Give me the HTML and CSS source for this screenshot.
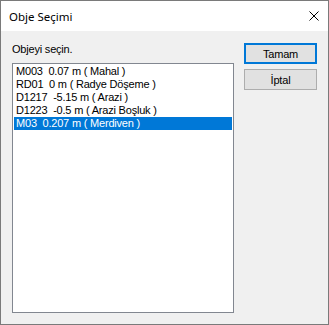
FILE: index.html
```html
<!DOCTYPE html>
<html>
<head>
<meta charset="UTF-8">
<title>Obje Seçimi</title>
<link rel="stylesheet" href="styles.css">
</head>
<body>
<div class="window">
	<div class="titlebar">
		<span class="title">Obje Seçimi</span>
		<svg class="close" width="10" height="10" viewBox="0 0 10 10">
			<path d="M0.5 0.5 L9.5 9.5 M9.5 0.5 L0.5 9.5" stroke="#000" stroke-width="1" fill="none"/>
		</svg>
	</div>
	<div class="client">
		<div class="main">
			<div class="label">Objeyi seçin.</div>
			<div class="listbox">
				<div class="item">M003&nbsp; 0.07 m ( Mahal )</div>
				<div class="item">RD01&nbsp; 0 m ( Radye Döşeme )</div>
				<div class="item">D1217&nbsp; -5.15 m ( Arazi )</div>
				<div class="item">D1223&nbsp; -0.5 m ( Arazi Boşluk )</div>
				<div class="item selected">M03&nbsp; 0.207 m ( Merdiven )</div>
			</div>
		</div>
		<div class="buttons">
			<button class="btn default">Tamam</button>
			<button class="btn">İptal</button>
		</div>
	</div>
</div>
</body>
</html>
```

FILE: styles.css
```css
html, body {
	margin: 0;
	padding: 0;
	background: #2b2b45;
}
.window {
	width: 329px;
	height: 325px;
	box-sizing: border-box;
	border: 1px solid #7a7a7a;
	background: #f0f0f0;
	display: flex;
	flex-direction: column;
}
.titlebar {
	height: 30px;
	background: #ffffff;
	display: flex;
	align-items: center;
	padding-left: 8px;
	padding-right: 9px;
}
.title {
	flex: 1;
	font-family: "Noto Sans", sans-serif;
	font-size: 11.5px;
	color: #000;
}
.close {
	display: block;
	margin-top: 0px;
}
.client {
	display: flex;
	padding: 12px 10px 0 11px;
	font-family: "Liberation Sans", Arial, sans-serif;
	font-size: 11px;
	letter-spacing: -0.2px;
	color: #000;
}
.main {
	width: 222px;
	display: flex;
	flex-direction: column;
}
.label {
	line-height: 13px;
	margin-bottom: 7px;
}
.listbox {
	height: 250px;
	box-sizing: border-box;
	border: 1px solid #828790;
	background: #ffffff;
	padding: 1px;
}
.item {
	height: 13px;
	line-height: 13px;
	padding-left: 2px;
	white-space: nowrap;
}
.item.selected {
	background: #0078d7;
	color: #ffffff;
}
.buttons {
	margin-left: 10px;
	width: 73px;
	display: flex;
	flex-direction: column;
	gap: 5px;
}
.btn {
	height: 21px;
	box-sizing: border-box;
	margin: 0;
	padding: 0;
	border: 1px solid #adadad;
	background: #e1e1e1;
	font-family: "Liberation Sans", Arial, sans-serif;
	font-size: 11px;
	letter-spacing: -0.2px;
	color: #000;
}
.btn.default {
	border: 2px solid #0078d7;
}
```
